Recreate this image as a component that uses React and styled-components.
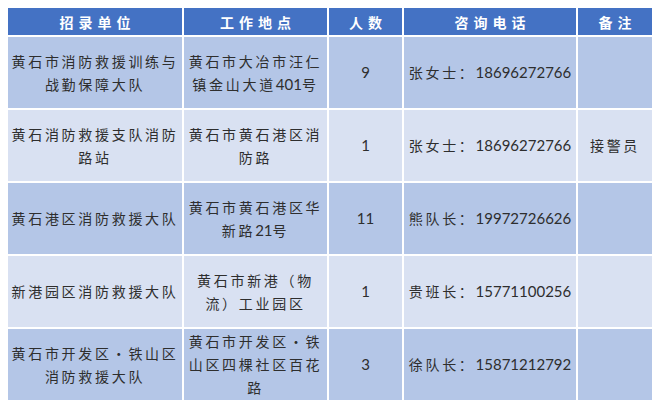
import React from "react";
import styled, { createGlobalStyle } from "styled-components";

const GlobalStyle = createGlobalStyle`
    body {
        margin: 0;
        background: #ffffff;
        font-family: Lato, "Noto Sans CJK SC", sans-serif;
    }
`;

const Page = styled.div`
    padding: 8px;
`;

const Grid = styled.div`
    display: grid;
    grid-template-columns: 174px 143px 73px 172px 74px;
    grid-template-rows: 27px repeat(5, 71px);
    gap: 2px;
    width: 644px;
`;

const HeadCell = styled.div`
    display: flex;
    align-items: center;
    justify-content: center;
    background: #4472c4;
    color: #ffffff;
    font-family: "Noto Sans CJK SC", sans-serif;
    font-weight: 700;
    font-size: 14px;
    letter-spacing: 5px;
    padding-left: 5px;
`;

const Cell = styled.div`
    display: flex;
    flex-direction: column;
    align-items: center;
    justify-content: center;
    background: ${(p) => (p.$light ? "#d9e1f2" : "#b4c6e7")};
    color: #2e2e2e;
    font-size: 14px;
    line-height: 22px;
    text-align: center;
`;

const Line = styled.div`
    white-space: nowrap;
`;

const Han = styled.span`
    font-family: "Noto Sans CJK SC", sans-serif;
    letter-spacing: 2.7px;
`;

const Latin = styled.span`
    font-family: Lato, sans-serif;
    font-size: 15px;
`;

// split text into CJK runs and latin/digit runs
const Text = ({ children }) => {
    const parts = children.match(/[0-9A-Za-z]+|[^0-9A-Za-z]+/g) || [];
    return parts.map((p, i) =>
        /^[0-9A-Za-z]/.test(p) ? <Latin key={i}>{p}</Latin> : <Han key={i}>{p}</Han>
    );
};

const headers = ["招录单位", "工作地点", "人数", "咨询电话", "备注"];

const rows = [
    [["黄石市消防救援训练与", "战勤保障大队"], ["黄石市大冶市汪仁", "镇金山大道401号"], ["9"], ["张女士：18696272766"], []],
    [["黄石消防救援支队消防", "路站"], ["黄石市黄石港区消", "防路"], ["1"], ["张女士：18696272766"], ["接警员"]],
    [["黄石港区消防救援大队"], ["黄石市黄石港区华", "新路21号"], ["11"], ["熊队长：19972726626"], []],
    [["新港园区消防救援大队"], ["黄石市新港（物", "流）工业园区"], ["1"], ["贵班长：15771100256"], []],
    [["黄石市开发区•铁山区", "消防救援大队"], ["黄石市开发区•铁", "山区四棵社区百花", "路"], ["3"], ["徐队长：15871212792"], []],
];

export default function App() {
    return (
        <Page>
            <GlobalStyle />
            <Grid>
                {headers.map((h) => (
                    <HeadCell key={h}>{h}</HeadCell>
                ))}
                {rows.map((row, r) =>
                    row.map((lines, c) => (
                        <Cell key={r + "-" + c} $light={r % 2 === 1}>
                            {lines.map((l, i) => (
                                <Line key={i}>
                                    <Text>{l}</Text>
                                </Line>
                            ))}
                        </Cell>
                    ))
                )}
            </Grid>
        </Page>
    );
}
